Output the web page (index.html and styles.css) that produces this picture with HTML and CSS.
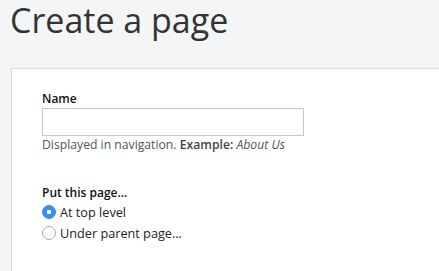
FILE: index.html
```html
<!DOCTYPE html>
<html lang="en">

<head>
    <meta charset="UTF-8">
    <meta name="viewport" content="width=device-width, initial-scale=1.0">
    <title>Create a page</title>
    <link rel="stylesheet" href="styles.css">
</head>

<body>
    <h1 class="title">Create a page</h1>

    <!-- Form panel -->
    <div class="panel">
        <div class="field">
            <label class="label" for="page-name">Name</label>
            <input type="text" id="page-name" class="text-input">
            <p class="help">Displayed in navigation. <b>Example:</b> <i>About Us</i></p>
        </div>

        <div class="field">
            <p class="label">Put this page...</p>
            <label class="radio-row">
                <input type="radio" name="place" class="radio" checked>
                <span>At top level</span>
            </label>
            <label class="radio-row">
                <input type="radio" name="place" class="radio">
                <span>Under parent page...</span>
            </label>
        </div>
    </div>
</body>

</html>
```

FILE: styles.css
```css
body {
    margin: 0;
    background-color: #f4f5f7;
    font-family: "Open Sans", "DejaVu Sans", sans-serif;
    color: #222;
}

.title {
    margin: 0;
    margin-bottom: 27px;
    padding-left: 10px;
    font-size: 34px;
    font-weight: 400;
    line-height: 1.2;
    color: #333;
}

.panel {
    margin-left: 11px;
    background-color: white;
    border: solid 1px #dcdcdc;
    border-right: none;
    padding: 21px 30px 40px 30px;
}

.field {
    margin-bottom: 31px;
}

.field:last-child {
    margin-bottom: 0;
}

.label {
    display: block;
    margin: 0;
    margin-bottom: 1px;
    font-size: 12px;
    font-weight: 600;
    line-height: 17px;
    color: #111;
}

.text-input {
    display: block;
    box-sizing: border-box;
    width: 262px;
    height: 28px;
    margin: 0;
    border: solid 1px #c8c8c8;
    outline: none;
}

.help {
    margin: 0;
    font-size: 12.2px;
    line-height: 17px;
    color: #555;
}

.help b {
    font-weight: 600;
    color: #444;
}

.radio-row {
    display: flex;
    align-items: center;
    gap: 4px;
    height: 21px;
    font-size: 12.7px;
    color: #222;
}

.radio {
    appearance: none;
    box-sizing: border-box;
    width: 14px;
    height: 14px;
    margin: 0;
    border: solid 1px #a8a8a8;
    border-radius: 50%;
    background-color: white;
}

.radio:checked {
    border-color: #3a8ef0;
    background-color: #3a8ef0;
    background-image: radial-gradient(circle, white 0, white 2px, transparent 2.5px);
}
```
